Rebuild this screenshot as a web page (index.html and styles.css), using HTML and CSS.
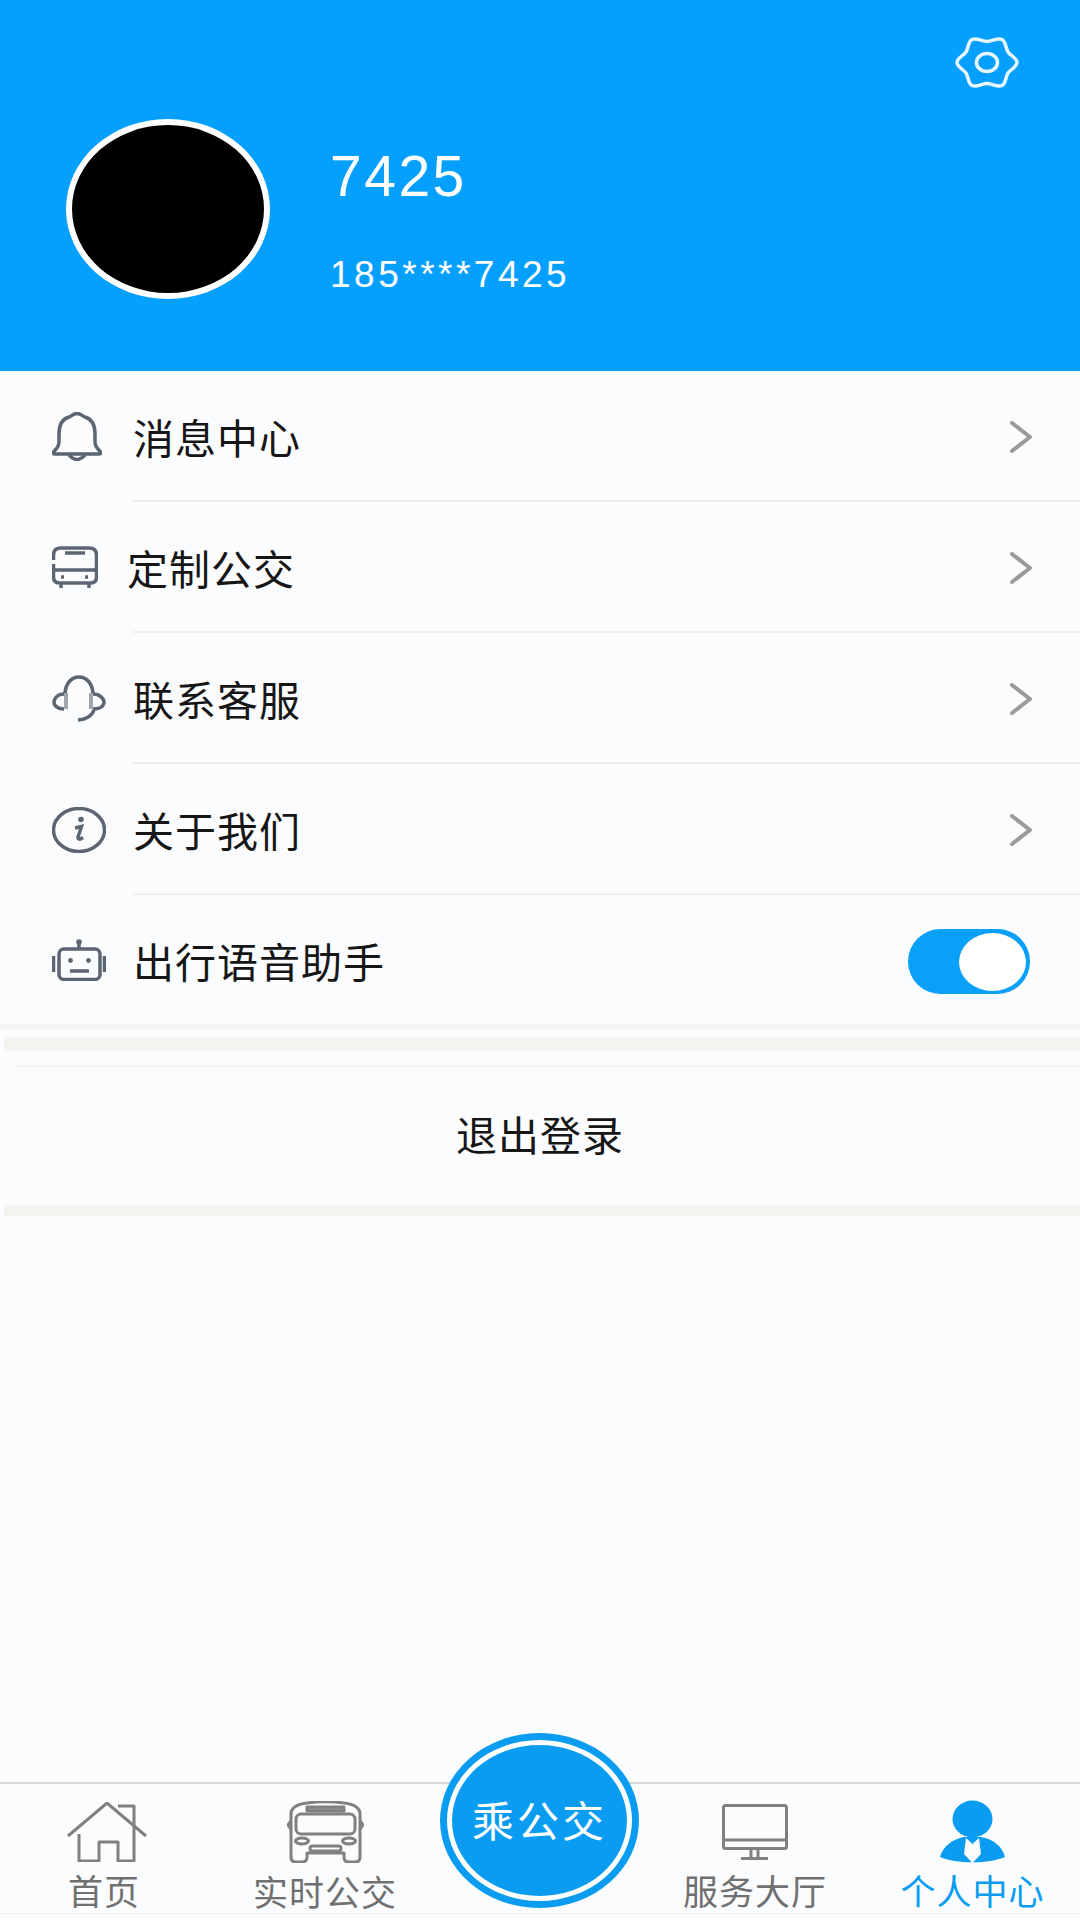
FILE: index.html
```html
<!DOCTYPE html>
<html lang="zh-CN">
<head>
<meta charset="utf-8">
<title>个人中心</title>
<link rel="stylesheet" href="styles.css">
</head>
<body>
<div class="app">
  <header class="profile">
    <div class="profile-top">
      <svg class="gear" viewBox="0 0 62 50"><path d="M31 4C36 4 41.600 -.25 46 2C50 4 49.500 10.700 52 14.400C54.500 18.100 61 20.500 61 25C61 29.500 54.500 31.900 52 35.600C49.500 39.300 50 46 46 48C41.600 50.250 36 46 31 46C26 46 20.400 50.250 16 48C12 46 12.500 39.300 10 35.600C7.500 31.900 1 29.500 1 25C1 20.500 7.500 18.100 10 14.400C12.500 10.700 12 4 16 2C20.400 -.25 26 4 31 4Z"/><ellipse cx="31" cy="25" rx="10.500" ry="9"/></svg>
    </div>
    <div class="profile-main">
      <div class="avatar"></div>
      <div class="profile-text">
        <div class="profile-name">7425</div>
        <div class="profile-phone">185****7425</div>
      </div>
    </div>
  </header>

  <section class="menu">
    <div class="row">
      <div class="row-icon"><svg class="icon" width="50" height="49" viewBox="0 0 50 49"><path d="M25 1.500C21 1.500 20 4 17 5C10 7 7 14 7 22V30C7 35 4 37 1.500 40Q.5 42 3 42H47Q49.500 42 48.500 40C46 37 43 35 43 30V22C43 14 40 7 33 5C30 4 29 1.500 25 1.500Z"/><path d="M17 43Q25 52 33 43"/></svg></div>
      <div class="row-main"><span class="row-label">消息中心</span><svg class="chevron" viewBox="0 0 22 32"><path d="M2 2L20 16L2 30"/></svg></div>
    </div>
    <div class="row">
      <div class="row-icon"><svg class="icon" width="46" height="43" viewBox="0 0 46 43"><path d="M1.500 14V9Q1.500 2 9 2H37Q44.500 2 44.500 9V31Q44.500 37 38 37H8Q1.500 37 1.500 31V18"/><path d="M13 7H33M2 24H44M9 37V42M37 37V42"/><path class="dots" d="M9 31H12M33 31H36"/></svg></div>
      <div class="row-main row-main--bus"><span class="row-label">定制公交</span><svg class="chevron" viewBox="0 0 22 32"><path d="M2 2L20 16L2 30"/></svg></div>
    </div>
    <div class="row">
      <div class="row-icon"><svg class="icon" width="54" height="48" viewBox="0 0 54 48"><path d="M13 20C13 8 20 2 27 2C34 2 41 8 41 20"/><path d="M12 19C5 19 2 24 2 27C2 31 6 34 12 34"/><path d="M41 19C48 19 52 24 52 27C52 31 48 34 41 34"/><path d="M42 35C40 41 33 45 26 45"/><path class="ear" d="M14 18V34M39 18V34"/></svg></div>
      <div class="row-main"><span class="row-label">联系客服</span><svg class="chevron" viewBox="0 0 22 32"><path d="M2 2L20 16L2 30"/></svg></div>
    </div>
    <div class="row">
      <div class="row-icon"><svg class="icon" width="54" height="46" viewBox="0 0 54 46"><ellipse cx="27" cy="23" rx="25.500" ry="21.500"/><path class="info" d="M23 21L29.500 19.500L26 30Q26 34 31 30.500"/><circle class="fill" cx="29" cy="12.500" r="2.800"/></svg></div>
      <div class="row-main"><span class="row-label">关于我们</span><svg class="chevron" viewBox="0 0 22 32"><path d="M2 2L20 16L2 30"/></svg></div>
    </div>
    <div class="row row--last">
      <div class="row-icon"><svg class="icon" width="54" height="42" viewBox="0 0 54 42"><circle class="fill" cx="27" cy="3" r="2.800"/><path d="M27 4V10"/><rect x="7" y="10" width="41" height="30.500" rx="5"/><path d="M1.500 17V33M52.500 17V33M18 32H37"/><circle class="fill" cx="18.500" cy="21.500" r="2.400"/><circle class="fill" cx="36.500" cy="21.500" r="2.400"/></svg></div>
      <div class="row-main row-main--voice"><span class="row-label">出行语音助手</span><div class="toggle"><div class="toggle-knob"></div></div></div>
    </div>
  </section>

  <div class="band band--thin"></div>
  <div class="band band--thick"></div>
  <div class="logout-line"></div>
  <div class="logout">退出登录</div>
  <div class="band band--end"></div>
  <div class="spacer"></div>

  <nav class="tabbar">
    <div class="tabs">
      <div class="tab">
        <div class="tab-icon"><svg class="tab-svg" width="80" height="60" viewBox="0 0 80 60"><path d="M1 34L40 1L79 34"/><path d="M12 32V59H32V40H51V59H67V4H51"/></svg></div>
        <span class="tab-label tab-label--home">首页</span>
      </div>
      <div class="tab">
        <div class="tab-icon"><svg class="tab-svg" width="77" height="62" viewBox="0 0 77 62"><path d="M4 13C4 5 12 3 20 2C32 .5 45 .5 57 2C65 3 73 5 73 13V56Q73 61 68 61H62Q57 61 57 56V52H20V56Q20 61 15 61H9Q4 61 4 56Z"/><path d="M4 20L1 24L4 28M73 20L76 24L73 28"/><rect class="tab-fill" x="20" y="6" width="37" height="4"/><rect x="9" y="13" width="59" height="20" rx="5"/><ellipse cx="15" cy="40" rx="6.500" ry="3"/><ellipse cx="62" cy="40" rx="6.500" ry="3"/><rect x="23" y="45" width="31" height="5" rx="2.500"/></svg></div>
        <span class="tab-label tab-label--low">实时公交</span>
      </div>
      <div class="tab tab--gap"></div>
      <div class="tab">
        <div class="tab-icon"><svg class="tab-svg" width="66" height="56" viewBox="0 0 66 56"><rect x="1.500" y="1.500" width="63" height="43" rx="2"/><path d="M1.500 36H64.500M29 45V54M36 45V54M19 54.500H46"/></svg></div>
        <span class="tab-label">服务大厅</span>
      </div>
      <div class="tab tab--active">
        <div class="tab-icon"><svg class="person" width="67" height="64" viewBox="0 0 67 64"><ellipse cx="33.500" cy="19" rx="20" ry="18.500"/><path d="M1 57C4 46 14 39 25 37H42C54 39 63 46 66 57C50 64 17 64 1 57Z"/><path class="tie" d="M27 38L33.500 44L40 38L42 54L33.500 63L25 54Z"/></svg></div>
        <span class="tab-label">个人中心</span>
      </div>
    </div>
    <div class="tab-foot"></div>
    <div class="ride"><div class="ride-inner">乘公交</div></div>
  </nav>
</div>
</body>
</html>
```
FILE: styles.css
```css
* {
  box-sizing: border-box;
}

html,
body {
  margin: 0;
  padding: 0;
}

body {
  background: #fafcfe;
  font-family: "Liberation Sans", "Noto Sans CJK SC", sans-serif;
}

.app {
  width: 1080px;
  height: 1920px;
  display: flex;
  flex-direction: column;
  overflow: hidden;
  background: #fafcfe;
}

/* header */
.profile {
  height: 371px;
  flex: none;
  padding-top: 37px;
  background: #05a0fe;
}

.profile-top {
  display: flex;
  justify-content: flex-end;
  padding-right: 62px;
}

.gear {
  width: 62px;
  height: 51px;
  overflow: visible;
  fill: none;
  stroke: #e8f6ff;
  stroke-width: 3.500;
}

.profile-main {
  display: flex;
  align-items: flex-start;
  margin-top: 31px;
  padding-left: 66px;
}

.avatar {
  width: 204px;
  height: 180px;
  border: 6px solid #fff;
  border-radius: 50%;
  background: #000;
}

.profile-text {
  margin-left: 60px;
  color: #fff;
}

.profile-name {
  margin-top: 27px;
  font-size: 57px;
  line-height: 60px;
  letter-spacing: 2.500px;
}

.profile-phone {
  margin-top: 48px;
  font-size: 37px;
  line-height: 42px;
  letter-spacing: 3.500px;
}

/* menu */
.menu {
  flex: none;
  font-family: "Noto Sans CJK SC", sans-serif;
}

.row {
  display: flex;
  height: 131px;
}

.row--last {
  height: 129px;
}

.row-icon {
  width: 133px;
  flex: none;
  display: flex;
  align-items: center;
  padding-left: 52px;
}

.icon {
  fill: none;
  stroke: #5b6672;
  stroke-width: 3.500;
}

.icon .fill {
  fill: #5b6672;
  stroke: none;
}

.icon .ear {
  stroke: #a0a6ac;
  stroke-width: 4;
}

.row-main {
  flex: 1;
  display: flex;
  align-items: center;
  justify-content: space-between;
  padding-right: 48px;
  border-bottom: 2px solid #eff0ee;
}

.row--last .row-main {
  border-bottom: 0;
  padding-right: 50px;
}

.row-label {
  font-size: 41px;
  letter-spacing: 1px;
  color: #161616;
}

.row-main--bus .row-label {
  margin-left: -6px;
}

.chevron {
  width: 22px;
  height: 32px;
  margin-top: 2px;
  fill: none;
  stroke: #9b9b9b;
  stroke-width: 4;
  stroke-linecap: round;
  stroke-linejoin: round;
}

.toggle {
  width: 122px;
  height: 65px;
  margin-top: 4px;
  display: flex;
  align-items: center;
  justify-content: flex-end;
  padding-right: 4px;
  border-radius: 33px;
  background: #08a0f8;
}

.toggle-knob {
  width: 67px;
  height: 58px;
  border-radius: 50%;
  background: #fff;
}

/* bands */
.band {
  flex: none;
  background: #f3f4f0;
}

.band--thin {
  height: 5px;
}

.band--thick {
  height: 14px;
  margin: 8px 0 0 4px;
}

.logout-line {
  flex: none;
  height: 2px;
  margin: 14px 0 0 16px;
  background: #f1f3f0;
}

.logout {
  flex: none;
  height: 138px;
  padding-bottom: 7px;
  display: flex;
  align-items: center;
  justify-content: center;
  font-family: "Noto Sans CJK SC", sans-serif;
  font-size: 41px;
  letter-spacing: 1px;
  color: #161616;
}

.band--end {
  height: 11px;
  margin-left: 4px;
}

.spacer {
  flex: 1;
}

/* tab bar */
.tabbar {
  position: relative;
  flex: none;
  height: 138px;
  border-top: 2px solid #d6d8da;
  font-family: "Noto Sans CJK SC", sans-serif;
}

.tabs {
  display: grid;
  grid-template-columns: 214px 222px 204px 230px 205px;
  height: 129px;
}

.tab {
  display: flex;
  flex-direction: column;
  align-items: center;
  padding-top: 15px;
  color: #707070;
}

.tab--active {
  color: #0a9cf0;
}

.tab-icon {
  height: 66px;
  display: flex;
  align-items: center;
  justify-content: center;
}

.tab-svg {
  fill: none;
  stroke: #808080;
  stroke-width: 3;
  stroke-linejoin: round;
}

.tab-svg .tab-fill {
  fill: #999;
}

.person {
  fill: #0a9cf0;
}

.person .tie {
  fill: #fafcfe;
}

.tab-label {
  margin-top: 1px;
  font-size: 35px;
  line-height: 48px;
  letter-spacing: 1px;
}

.tab-label--home {
  margin-right: 6px;
}

.tab-label--low {
  margin-top: 2px;
}

.tab-foot {
  height: 1px;
  background: #f0f1f0;
}

.ride {
  position: absolute;
  left: 440px;
  top: -51px;
  width: 199px;
  height: 175px;
  padding: 7px;
  border-radius: 50%;
  background: #0a9cf0;
}

.ride-inner {
  width: 100%;
  height: 100%;
  display: flex;
  align-items: center;
  justify-content: center;
  padding-bottom: 4px;
  border: 5px solid #fff;
  border-radius: 50%;
  color: #fff;
  font-size: 42px;
  letter-spacing: 3px;
}
```
